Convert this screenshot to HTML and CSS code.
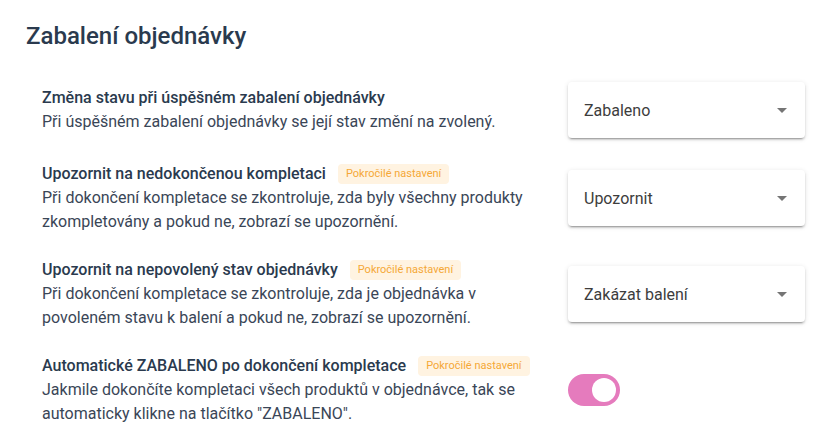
FILE: index.html
```html
<!DOCTYPE html>
<html lang="cs">

	<head>
		<meta charset="UTF-8">
		<meta name="viewport" content="width=device-width, initial-scale=1.0">
		<title>Zabalení objednávky</title>
		<link rel="stylesheet" href="styles.css">
	</head>

	<body>
		<h1 class="title">Zabalení objednávky</h1>
		<div class="settings">
			<div class="row">
				<div class="info">
					<strong class="name">Změna stavu při úspěšném zabalení objednávky</strong>
					<p class="desc">Při úspěšném zabalení objednávky se její stav změní na zvolený.</p>
				</div>
				<div class="select">
					<span>Zabaleno</span>
					<i class="arrow"></i>
				</div>
			</div>
			<div class="row">
				<div class="info">
					<strong class="name">Upozornit na nedokončenou kompletaci <em class="badge">Pokročilé nastavení</em></strong>
					<p class="desc">Při dokončení kompletace se zkontroluje, zda byly všechny produkty zkompletovány a pokud ne, zobrazí se upozornění.</p>
				</div>
				<div class="select">
					<span>Upozornit</span>
					<i class="arrow"></i>
				</div>
			</div>
			<div class="row">
				<div class="info">
					<strong class="name">Upozornit na nepovolený stav objednávky <em class="badge">Pokročilé nastavení</em></strong>
					<p class="desc">Při dokončení kompletace se zkontroluje, zda je objednávka v povoleném stavu k balení a pokud ne, zobrazí se upozornění.</p>
				</div>
				<div class="select">
					<span>Zakázat balení</span>
					<i class="arrow"></i>
				</div>
			</div>
			<div class="row">
				<div class="info">
					<strong class="name">Automatické ZABALENO po dokončení kompletace <em class="badge">Pokročilé nastavení</em></strong>
					<p class="desc">Jakmile dokončíte kompletaci všech produktů v objednávce, tak se automaticky klikne na tlačítko "ZABALENO".</p>
				</div>
				<div class="switch on"><span class="knob"></span></div>
			</div>
		</div>
	</body>

</html>
```

FILE: styles.css
```css
* {
	margin: 0;
	padding: 0;
	box-sizing: border-box;
}

body {
	font-family: Roboto, "Noto Sans", sans-serif;
	background: #fff;
	color: #2c3a4b;
	padding: 22px 26px;
}

.title {
	font-size: 24px;
	line-height: 28px;
	font-weight: 500;
	color: #2a3a4e;
	margin-bottom: 32px;
}

.settings {
	padding-left: 16px;
	display: flex;
	flex-direction: column;
	gap: 24px;
}

.row {
	display: grid;
	grid-template-columns: 1fr 237px;
	column-gap: 24px;
	align-items: center;
}

.name {
	display: flex;
	align-items: center;
	font-size: 16px;
	font-weight: 500;
	line-height: 24px;
	color: #2a3a4e;
}

.desc {
	font-size: 16px;
	line-height: 24px;
	color: #3a4657;
}

.badge {
	font-style: normal;
	font-weight: 400;
	font-size: 11px;
	line-height: 20px;
	height: 20px;
	padding: 0 8px;
	margin-left: 12px;
	border-radius: 4px;
	background: #fff3e1;
	color: #f5a836;
}

.select {
	height: 56px;
	display: flex;
	align-items: center;
	justify-content: space-between;
	padding: 0 18px 0 16px;
	background: #fff;
	border-radius: 4px;
	box-shadow: 0 3px 1px -2px rgba(0, 0, 0, .2), 0 2px 2px 0 rgba(0, 0, 0, .14), 0 1px 5px 0 rgba(0, 0, 0, .12);
	font-size: 16px;
	color: #3d3d3d;
}

.arrow {
	width: 0;
	height: 0;
	border-left: 5px solid transparent;
	border-right: 5px solid transparent;
	border-top: 5px solid #757575;
}

.switch {
	width: 52px;
	height: 32px;
	border-radius: 16px;
	background: #e57bbd;
	display: flex;
	align-items: center;
	justify-content: flex-end;
	padding: 0 4px;
}

.switch .knob {
	width: 24px;
	height: 24px;
	border-radius: 50%;
	background: #fff;
}
```
